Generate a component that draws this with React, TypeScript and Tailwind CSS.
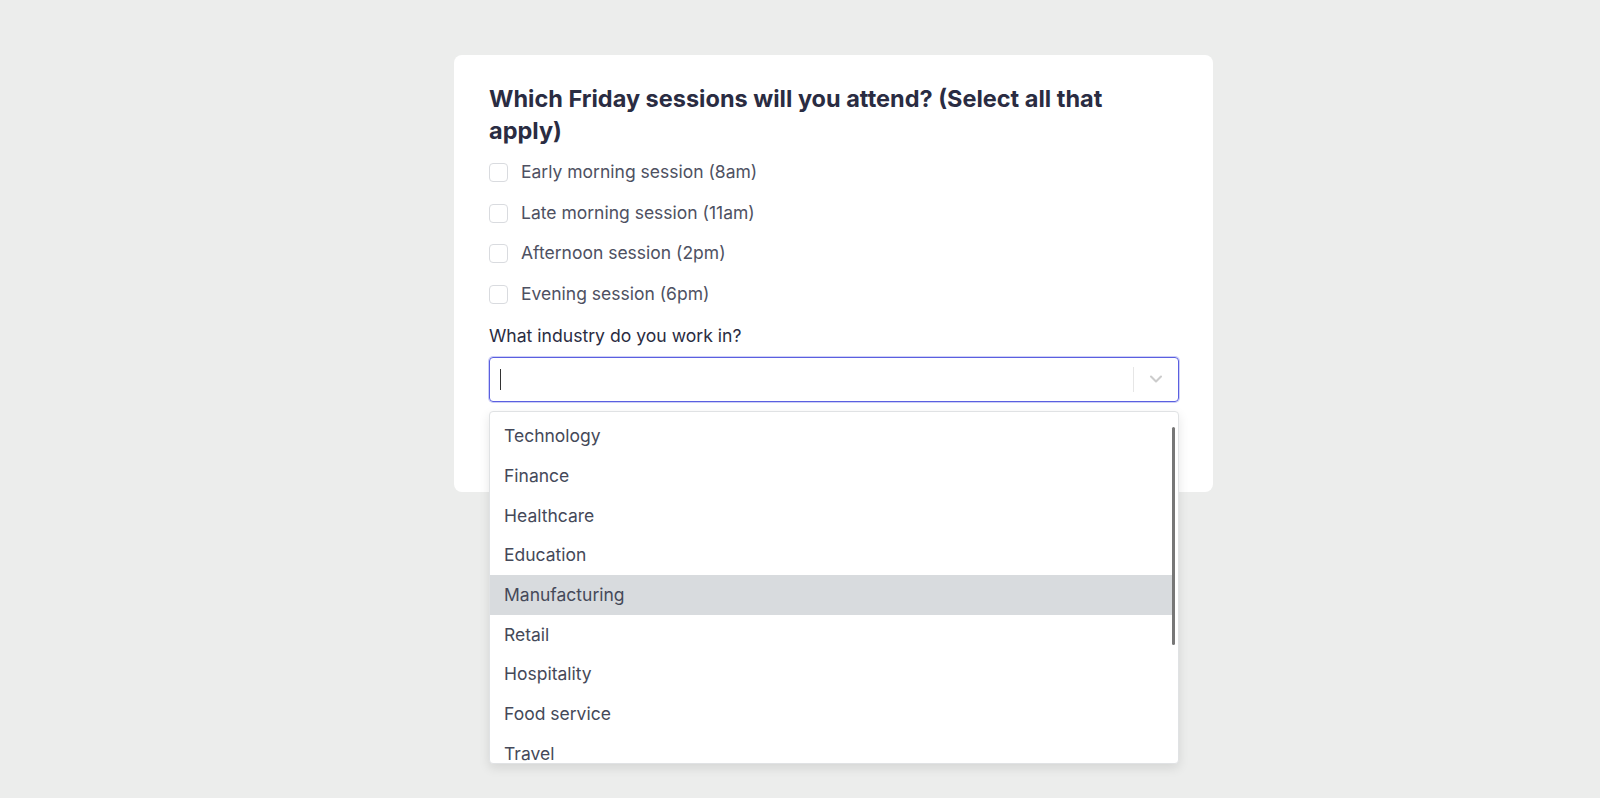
import { ChevronDown } from "lucide-react";

const sessions = [
  "Early morning session (8am)",
  "Late morning session (11am)",
  "Afternoon session (2pm)",
  "Evening session (6pm)",
];

const industries = [
  "Technology",
  "Finance",
  "Healthcare",
  "Education",
  "Manufacturing",
  "Retail",
  "Hospitality",
  "Food service",
  "Travel",
  "Other",
];

export default function App() {
  return (
    <main
      className="min-h-[798px] bg-[#ecedec] pl-[454px] pt-[55px]"
      style={{ fontFamily: "Inter, 'Noto Sans', sans-serif" }}
    >
      <div className="w-[759px] h-[437px] bg-white rounded-lg pl-[35px] pr-[34px] pt-[28px]">
        <h1 className="text-[23.5px] leading-[32px] font-bold text-[#2a2c42]">
          Which Friday sessions will you attend? (Select all that apply)
        </h1>

        <div className="mt-[13px] flex flex-col gap-[15.5px]">
          {sessions.map((s) => (
            <label key={s} className="flex items-center gap-[13px] h-[25px]">
              <span className="w-[19px] h-[19px] rounded-[4px] border border-[#d9dbdf] bg-white" />
              <span className="text-[17.5px] text-[#4e5162]">{s}</span>
            </label>
          ))}
        </div>

        <p className="mt-[16px] text-[17.6px] leading-[26px] text-[#2a2c42]">What industry do you work in?</p>

        <div className="relative mt-[8px]">
          <div className="h-[45px] rounded-[4px] border border-[#5a5fe0] ring-1 ring-[#5a5fe0]/30 flex items-center">
            <div className="flex-1 pl-[10px] flex items-center">
              <span className="w-px h-[21px] bg-[#333]" />
            </div>
            <span className="w-px h-[25px] bg-[#e6e6e6]" />
            <div className="w-[44px] flex items-center justify-center">
              <ChevronDown className="w-[20px] h-[20px] text-[#cccccc]" strokeWidth={2.5} />
            </div>
          </div>

          <div className="absolute left-0 right-0 top-[54px] h-[353px] overflow-hidden rounded-[4px] border border-[#e0e2e4] bg-white shadow-[0_4px_11px_rgba(0,0,0,0.1)] pt-[5px] z-10">
            {industries.map((item) => (
              <div
                key={item}
                className={
                  "h-[39.7px] flex items-center px-[14px] text-[17.5px] text-[#454959] " +
                  (item === "Manufacturing" ? "bg-[#d8dbde] mr-[4px]" : "")
                }
              >
                {item}
              </div>
            ))}
            <div className="absolute right-[3px] top-[15px] w-[3px] h-[218px] rounded-full bg-[#777]" />
          </div>
        </div>
      </div>
    </main>
  );
}
